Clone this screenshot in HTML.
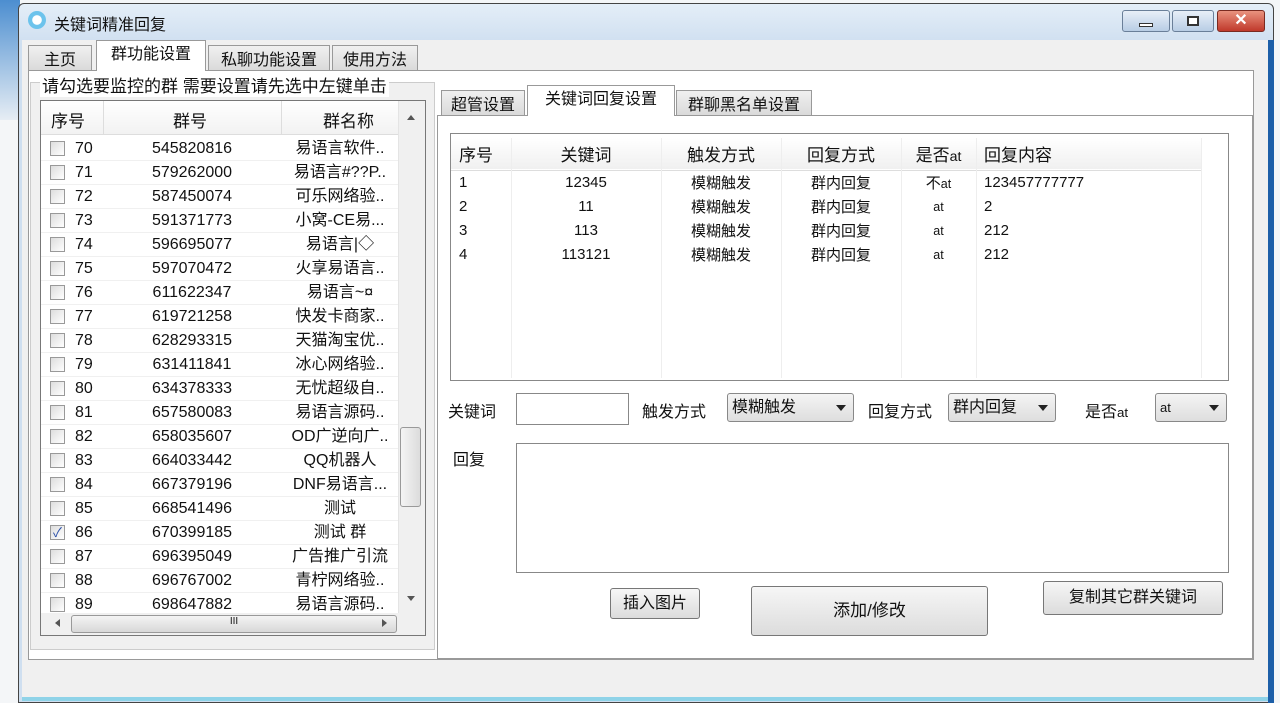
<!DOCTYPE html><html><head><meta charset="utf-8"><style>
*{box-sizing:border-box;margin:0;padding:0}
body{width:1280px;height:703px;overflow:hidden;background:#f4f6f8;font-family:"Liberation Sans","Noto Sans CJK SC",sans-serif;font-size:15px;color:#111;position:relative}
.a{position:absolute}
.btn{position:absolute;border:1px solid #777;border-radius:3px;background:linear-gradient(#f6f6f6,#dcdcdc);text-align:center}
.tab{position:absolute;border:1px solid #999;border-bottom:none;background:linear-gradient(#f0f0f0,#dadada);text-align:center;font-size:16px}
.combo{position:absolute;border:1px solid #888;border-radius:3px;background:linear-gradient(#f4f4f4,#dedede);font-size:15px;padding-left:4px}
.combo:after{content:"";position:absolute;right:7px;top:11px;border:5px solid transparent;border-top:6px solid #222}
table{border-collapse:collapse}
</style></head><body>
<div class="a" style="left:0;top:0;width:20px;height:120px;background:linear-gradient(#4c8ed0,#e6edf4)"></div>
<div class="a" style="left:18px;top:3px;width:1256px;height:700px;background:linear-gradient(#e4eef8,#cfdff0 40px,#cfdff0);border:1px solid #444;border-radius:6px 6px 0 0"></div>
<div class="a" style="left:1268px;top:40px;width:6px;height:663px;background:#1d5fa8"></div>
<div class="a" style="left:28px;top:11px;width:18px;height:18px;border-radius:50%;background:radial-gradient(#fff 35%,#6cc3ec 40%)"></div>
<div class="a" style="left:54px;top:11px;font-size:16px">关键词精准回复</div>
<div class="btn" style="left:1122px;top:10px;width:48px;height:22px;background:linear-gradient(#e8eff8,#b8cde5);border-color:#6a7f99"><div class="a" style="left:16px;top:12px;width:14px;height:4px;background:#fff;border:1px solid #333"></div></div>
<div class="btn" style="left:1172px;top:10px;width:42px;height:22px;background:linear-gradient(#e8eff8,#b8cde5);border-color:#6a7f99"><div class="a" style="left:14px;top:5px;width:12px;height:10px;border:2px solid #333;background:#fff"></div></div>
<div class="btn" style="left:1217px;top:10px;width:48px;height:22px;background:linear-gradient(#e9937f,#c0392b);border-color:#7a2a20;color:#fff;font-weight:bold;font-size:16px;line-height:19px">✕</div>
<div class="a" style="left:22px;top:40px;width:1246px;height:660px;background:#f0f0f0"></div>
<div class="a" style="left:22px;top:697px;width:1246px;height:4px;background:#8fd3e8"></div>
<!-- outer tabs -->
<div class="a" style="left:28px;top:70px;width:1226px;height:590px;border:1px solid #999;background:#fff"></div>
<div class="tab" style="left:28px;top:45px;width:64px;height:25px">主页</div>
<div class="tab" style="left:96px;top:40px;width:110px;height:31px;background:#fff;line-height:28px">群功能设置</div>
<div class="tab" style="left:208px;top:45px;width:122px;height:25px">私聊功能设置</div>
<div class="tab" style="left:332px;top:45px;width:86px;height:25px">使用方法</div>
<!-- group box -->
<div class="a" style="left:30px;top:82px;width:405px;height:568px;border:1px solid #ccc;background:#f0f0f0"></div>
<div class="a" style="left:40px;top:72px;background:#fff;font-size:17px;padding:0 2px">请勾选要监控的群 需要设置请先选中左键单击</div>
<div class="a" style="left:40px;top:100px;width:386px;height:536px;border:1px solid #777;background:#fff;overflow:hidden">
<div class="a" style="left:0;top:0;width:357px;height:34px;background:linear-gradient(#fff,#f2f2f2);border-bottom:1px solid #ddd;font-size:17px">
<span class="a" style="left:10px;top:6px">序号</span><span class="a" style="left:132px;top:6px">群号</span><span class="a" style="left:282px;top:6px">群名称</span>
<div class="a" style="left:62px;top:0;width:1px;height:34px;background:#ddd"></div><div class="a" style="left:240px;top:0;width:1px;height:34px;background:#ddd"></div></div>
<div id="rows"></div>
<div class="a" style="left:357px;top:0;width:27px;height:512px;background:#f0f0f0;border-left:1px solid #e4e4e4"></div>
<div class="a" style="left:366px;top:10px;border:4px solid transparent;border-bottom:5px solid #555"></div>
<div class="a" style="left:366px;top:495px;border:4px solid transparent;border-top:5px solid #555"></div>
<div class="a" style="left:359px;top:326px;width:21px;height:80px;border:1px solid #999;border-radius:3px;background:linear-gradient(90deg,#f4f4f4,#dcdcdc)"></div>
<div class="a" style="left:0;top:512px;width:384px;height:22px;background:#f0f0f0"></div>
<div class="a" style="left:30px;top:514px;width:326px;height:18px;border:1px solid #999;border-radius:3px;background:linear-gradient(#f4f4f4,#d8d8d8);font-size:10px;text-align:center">III</div>
<div class="a" style="left:10px;top:518px;border:4px solid transparent;border-right:5px solid #555"></div>
<div class="a" style="left:341px;top:518px;border:4px solid transparent;border-left:5px solid #555"></div>
</div>
<!-- inner tabs -->
<div class="a" style="left:437px;top:115px;width:816px;height:544px;border:1px solid #999;background:#fff"></div>
<div class="tab" style="left:441px;top:90px;width:84px;height:25px">超管设置</div>
<div class="tab" style="left:527px;top:85px;width:148px;height:31px;background:#fff;line-height:28px">关键词回复设置</div>
<div class="tab" style="left:676px;top:90px;width:136px;height:25px">群聊黑名单设置</div>
<div class="a" style="left:450px;top:133px;width:779px;height:248px;border:1px solid #888;background:#fff">
<table style="position:absolute;left:0;top:4px;width:750px;font-size:15px">
<tr style="height:32px;background:linear-gradient(#fff,#f0f0f0);font-size:17px;border-bottom:1px solid #ddd"><td style="width:60px;padding-left:8px">序号</td><td style="width:150px;text-align:center">关键词</td><td style="width:120px;text-align:center">触发方式</td><td style="width:120px;text-align:center">回复方式</td><td style="width:75px;text-align:center">是否<small>at</small></td><td style="padding-left:8px">回复内容</td></tr>
<tr style="height:24px"><td style="padding-left:8px">1</td><td align=center>12345</td><td align=center>模糊触发</td><td align=center>群内回复</td><td align=center>不<small>at</small></td><td style="padding-left:8px">123457777777</td></tr>
<tr style="height:24px"><td style="padding-left:8px">2</td><td align=center>11</td><td align=center>模糊触发</td><td align=center>群内回复</td><td align=center><small>at</small></td><td style="padding-left:8px">2</td></tr>
<tr style="height:24px"><td style="padding-left:8px">3</td><td align=center>113</td><td align=center>模糊触发</td><td align=center>群内回复</td><td align=center><small>at</small></td><td style="padding-left:8px">212</td></tr>
<tr style="height:24px"><td style="padding-left:8px">4</td><td align=center>113121</td><td align=center>模糊触发</td><td align=center>群内回复</td><td align=center><small>at</small></td><td style="padding-left:8px">212</td></tr>
</table>
<div class="a" style="left:60px;top:4px;width:1px;height:240px;background:#eee"></div>
<div class="a" style="left:210px;top:4px;width:1px;height:240px;background:#eee"></div>
<div class="a" style="left:330px;top:4px;width:1px;height:240px;background:#eee"></div>
<div class="a" style="left:450px;top:4px;width:1px;height:240px;background:#eee"></div>
<div class="a" style="left:525px;top:4px;width:1px;height:240px;background:#eee"></div>
<div class="a" style="left:750px;top:4px;width:1px;height:240px;background:#eee"></div>
</div>
<div class="a" style="left:448px;top:398px;font-size:16px">关键词</div>
<div class="a" style="left:516px;top:393px;width:113px;height:32px;border:1px solid #888;background:#fff"></div>
<div class="a" style="left:642px;top:398px;font-size:16px">触发方式</div>
<div class="combo" style="left:727px;top:393px;width:127px;height:29px;line-height:27px;font-size:16px">模糊触发</div>
<div class="a" style="left:868px;top:398px;font-size:16px">回复方式</div>
<div class="combo" style="left:948px;top:393px;width:108px;height:29px;line-height:27px;font-size:16px">群内回复</div>
<div class="a" style="left:1085px;top:398px;font-size:16px">是否<small>at</small></div>
<div class="combo" style="left:1155px;top:393px;width:72px;height:29px;line-height:27px;font-size:13px">at</div>
<div class="a" style="left:453px;top:446px;font-size:16px">回复</div>
<div class="a" style="left:516px;top:443px;width:713px;height:130px;border:1px solid #888;background:#fff"></div>
<div class="btn" style="left:610px;top:588px;width:90px;height:31px;line-height:29px;font-size:16px">插入图片</div>
<div class="btn" style="left:751px;top:586px;width:237px;height:50px;line-height:48px;font-size:17px">添加/修改</div>
<div class="btn" style="left:1043px;top:581px;width:180px;height:34px;line-height:32px;font-size:16px">复制其它群关键词</div>
<script>
var d=[[70,545820816,"易语言软件.."],[71,579262000,"易语言#??P.."],[72,587450074,"可乐网络验.."],[73,591371773,"小窝-CE易..."],[74,596695077,"易语言|◇"],[75,597070472,"火享易语言.."],[76,611622347,"易语言~¤"],[77,619721258,"快发卡商家.."],[78,628293315,"天猫淘宝优.."],[79,631411841,"冰心网络验.."],[80,634378333,"无忧超级自.."],[81,657580083,"易语言源码.."],[82,658035607,"OD广逆向广.."],[83,664033442,"QQ机器人"],[84,667379196,"DNF易语言..."],[85,668541496,"测试"],[86,670399185,"测试 群"],[87,696395049,"广告推广引流"],[88,696767002,"青柠网络验.."],[89,698647882,"易语言源码.."]];
var h="";d.forEach(function(r,i){var t=36+i*24;h+='<div class="a" style="left:0;top:'+t+'px;width:357px;height:24px;border-bottom:1px solid #f0f0f0;font-size:16px;line-height:24px">'+
'<div class="a" style="left:9px;top:4px;width:15px;height:15px;border:1px solid #999;background:linear-gradient(135deg,#ddd,#fff);color:#2a4fa8;font-size:13px;line-height:13px;text-align:center">'+(r[0]==86?'✓':'')+'</div>'+
'<span class="a" style="left:34px">'+r[0]+'</span><span class="a" style="left:62px;width:178px;text-align:center">'+r[1]+'</span><span class="a" style="left:241px;width:116px;text-align:center;white-space:nowrap;overflow:hidden">'+r[2]+'</span></div>';});
document.getElementById("rows").innerHTML=h;
</script>
</body></html>
